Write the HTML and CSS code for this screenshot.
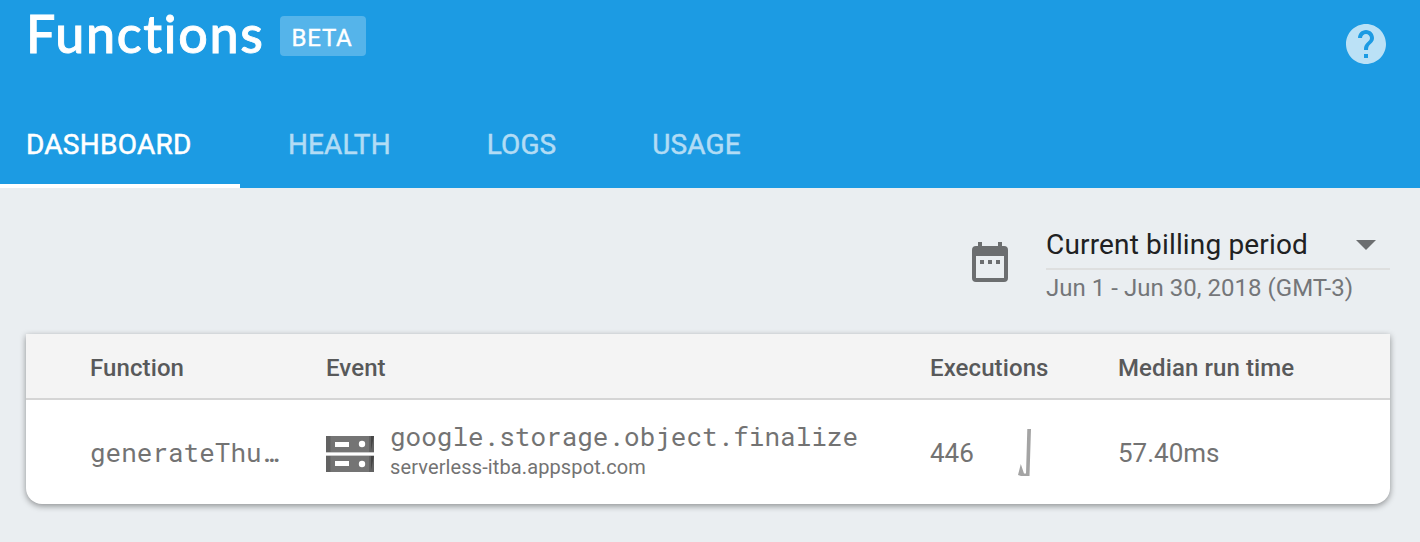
FILE: index.html
```html
<!DOCTYPE html>
<html lang="en">
<head>
<meta charset="utf-8">
<title>Functions</title>
<link rel="stylesheet" href="styles.css">
</head>
<body>
<header class="header">
  <div class="title-row">
    <h1 class="title">Functions</h1>
    <span class="beta">BETA</span>
    <svg class="help" width="48" height="48" viewBox="0 0 24 24"><path fill="#bbe1f6" d="M12 2C6.48 2 2 6.48 2 12s4.480 10 10 10 10-4.480 10-10S17.520 2 12 2zm1 17h-2v-2h2v2zm2.070-7.750l-.9.920C13.450 12.900 13 13.500 13 15h-2v-.5c0-1.100.45-2.100 1.170-2.830l1.240-1.260c.37-.36.59-.86.59-1.410 0-1.100-.9-2-2-2s-2 .9-2 2H8c0-2.210 1.790-4 4-4s4 1.790 4 4c0 .88-.36 1.680-.93 2.250z"/></svg>
  </div>
  <nav class="tabs">
    <a class="tab active">DASHBOARD</a>
    <a class="tab">HEALTH</a>
    <a class="tab">LOGS</a>
    <a class="tab">USAGE</a>
  </nav>
</header>
<main class="content">
  <div class="period">
    <svg class="calendar" width="36" height="40" viewBox="0 0 36 40"><path fill="#6c6e70" fill-rule="evenodd" d="M6 0h4v4h16V0h4v4h2a4 4 0 0 1 4 4v28a4 4 0 0 1-4 4H4a4 4 0 0 1-4-4V8a4 4 0 0 1 4-4h2zM4 14v22h28V14z"/><path fill="#6c6e70" d="M8 18h4v4H8zM16 18h4v4h-4zM24 18h4v4h-4z"/></svg>
    <div class="picker">
      <div class="select"><span class="select-text">Current billing period</span><svg width="20" height="10" viewBox="0 0 20 10"><path fill="#6c6e70" d="M0 0h20L10 10z"/></svg></div>
      <div class="dates">Jun 1 - Jun 30, 2018 (GMT-3)</div>
    </div>
  </div>
  <section class="card">
    <div class="row head">
      <div>Function</div><div>Event</div><div>Executions</div><div>Median run time</div>
    </div>
    <div class="row body">
      <div class="mono name">generateThu…</div>
      <div class="event">
        <svg class="server" width="48" height="36" viewBox="0 0 48 36">
          <path fill="#747474" d="M0 0h48v16H0zM0 20h48v16H0z"/>
          <path fill="#626262" d="M0 0h4.500v16H0zM0 20h4.500v16H0zM43 0h5v16h-5zM43 20h5v16h-5z"/>
          <path fill="#454545" d="M45 0h3l-3 14zM45 20h3l-3 14z"/>
          <path fill="#c9c9c9" d="M0 16h48v1H0zM0 19h48v1H0z"/>
          <path fill="#fff" d="M9 6h14v5H9zM9 25h14v5H9z"/>
          <circle cx="36" cy="8" r="3.200" fill="#fff"/><circle cx="36" cy="28" r="3.200" fill="#fff"/>
        </svg>
        <div class="event-text">
          <div class="mono event-name">google.storage.object.finalize</div>
          <div class="resource">serverless-itba.appspot.com</div>
        </div>
      </div>
      <div class="executions"><span>446</span><svg width="14" height="48" viewBox="0 0 14 48"><path fill="#a4a4a4" d="M0 46L2.800 35 6 44.500h2L9.300 0H13l-1.500 47H3z"/></svg></div>
      <div>57.40ms</div>
    </div>
  </section>
</main>
</body>
</html>
```
FILE: styles.css
```css
* { box-sizing: border-box; }
body {
  margin: 0;
  height: 542px;
  overflow: hidden;
  background: #eaeef1;
  font-family: Roboto, "Liberation Sans", sans-serif;
}
.header {
  height: 188px;
  background: #1c9be3;
  color: #fff;
  display: flex;
  flex-direction: column;
}
.title-row {
  height: 100px;
  display: flex;
  align-items: flex-start;
  padding: 0 30px 0 26px;
}
.title {
  margin: 0;
  width: 254px;
  font: 500 52px/66px "Google Sans", Lato, sans-serif;
  letter-spacing: 1.7px;
  -webkit-text-stroke: .9px #fff;
  white-space: nowrap;
}
.beta {
  margin-top: 16px;
  width: 86px;
  height: 40px;
  padding-right: 2px;
  border-radius: 4px;
  background: #55b4ea;
  font-size: 24px;
  line-height: 44px;
  letter-spacing: .8px;
  -webkit-text-stroke: .4px #fff;
  text-align: center;
}
.help { margin: 20px 0 0 auto; }
.tabs { display: flex; height: 88px; }
.tab {
  padding: 0 48px;
  font-size: 28px;
  line-height: 90px;
  letter-spacing: .1px;
  -webkit-text-stroke: .5px currentColor;
  color: #b2dcf5;
}
.tab.active {
  width: 240px;
  padding: 0 0 0 26px;
  letter-spacing: .25px;
  color: #fff;
  border-bottom: 4px solid #fff;
}
.content { padding: 34px 30px 0 26px; }
.period {
  height: 112px;
  display: flex;
  justify-content: flex-end;
  gap: 38px;
}
.calendar { margin-top: 20px; }
.picker { width: 344px; }
.select {
  height: 48px;
  border-bottom: 2px solid #dedfdf;
  display: flex;
  justify-content: space-between;
  align-items: center;
  padding-right: 14px;
  font-size: 28px;
  line-height: 46px;
  letter-spacing: .16px;
  color: #202122;
}
.dates {
  font-size: 24px;
  line-height: 36px;
  letter-spacing: .03px;
  color: #747679;
  white-space: nowrap;
}
.card {
  height: 170px;
  overflow: hidden;
  border-radius: 0 0 16px 16px;
  background: #fff;
  box-shadow: 0 2px 6px rgba(0, 0, 0, .4);
}
.row {
  display: grid;
  grid-template-columns: 236px 604px 188px 1fr;
  align-items: center;
  padding-left: 64px;
}
.head {
  height: 66px;
  padding-top: 4px;
  background: #f4f4f4;
  border-bottom: 2px solid #d5d5d5;
  color: #58595a;
  font-size: 24px;
  font-weight: 500;
  letter-spacing: .1px;
}
.body {
  height: 104px;
  padding-top: 2px;
  color: #737373;
  font-size: 26px;
}
.mono {
  font-family: "Roboto Mono", "Liberation Mono", monospace;
  font-size: 26px;
}
.name { padding-bottom: 2px; }
.event { display: flex; align-items: center; gap: 16px; }
.server { margin-top: 2px; }
.event-text { padding-bottom: 5px; }
.event-name { line-height: 34px; }
.resource { font-size: 20px; line-height: 29px; letter-spacing: .12px; }
.executions { display: flex; align-items: center; gap: 44px; }
```
